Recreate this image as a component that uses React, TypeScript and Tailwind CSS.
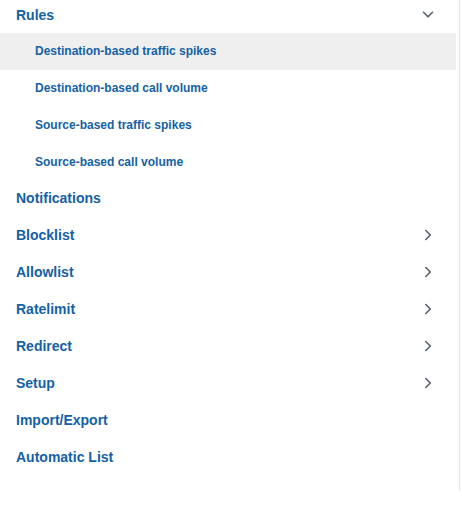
import React from "react";

const Down = () => (
  <svg width="16" height="16" viewBox="0 0 16 16" fill="none" stroke="#56606b" strokeWidth="1.6" strokeLinecap="round" strokeLinejoin="round">
    <path d="M3.5 5.3 L8 9.8 L12.5 5.3" />
  </svg>
);

const Right = () => (
  <svg width="16" height="16" viewBox="0 0 16 16" fill="none" stroke="#56606b" strokeWidth="1.6" strokeLinecap="round" strokeLinejoin="round">
    <path d="M5.8 3.5 L10.3 8 L5.8 12.5" />
  </svg>
);

const subs = [
  { label: "Destination-based traffic spikes", active: true },
  { label: "Destination-based call volume" },
  { label: "Source-based traffic spikes" },
  { label: "Source-based call volume" },
];

const tops: { label: string; chevron?: boolean }[] = [
  { label: "Notifications" },
  { label: "Blocklist", chevron: true },
  { label: "Allowlist", chevron: true },
  { label: "Ratelimit", chevron: true },
  { label: "Redirect", chevron: true },
  { label: "Setup", chevron: true },
  { label: "Import/Export" },
  { label: "Automatic List" },
];

export default function App() {
  return (
    <div className="w-[462px] h-[506px] bg-white overflow-hidden" style={{ fontFamily: '"Liberation Sans", Arial, sans-serif' }}>
      <div className="w-[460px] h-[490px] border-r border-[#e2e2e2]">
        <ul className="w-[456px] flex flex-col">
          <li className="h-[33px] pb-[3px] flex items-center justify-between pl-4 pr-[20px]">
            <span className="text-[14px] font-bold text-[#1461a6]">Rules</span>
            <Down />
          </li>
          {subs.map((s) => (
            <li
              key={s.label}
              className={`h-[37px] pb-[2px] flex items-center pl-[35px] ${s.active ? "bg-[#efefef]" : ""}`}
            >
              <span className="text-[12px] font-bold text-[#1461a6]">{s.label}</span>
            </li>
          ))}
          {tops.map((t) => (
            <li key={t.label} className="h-[37px] pb-[3px] flex items-center justify-between pl-4 pr-[20px]">
              <span className="text-[14px] font-bold text-[#1461a6]">{t.label}</span>
              {t.chevron ? <Right /> : null}
            </li>
          ))}
        </ul>
      </div>
    </div>
  );
}
